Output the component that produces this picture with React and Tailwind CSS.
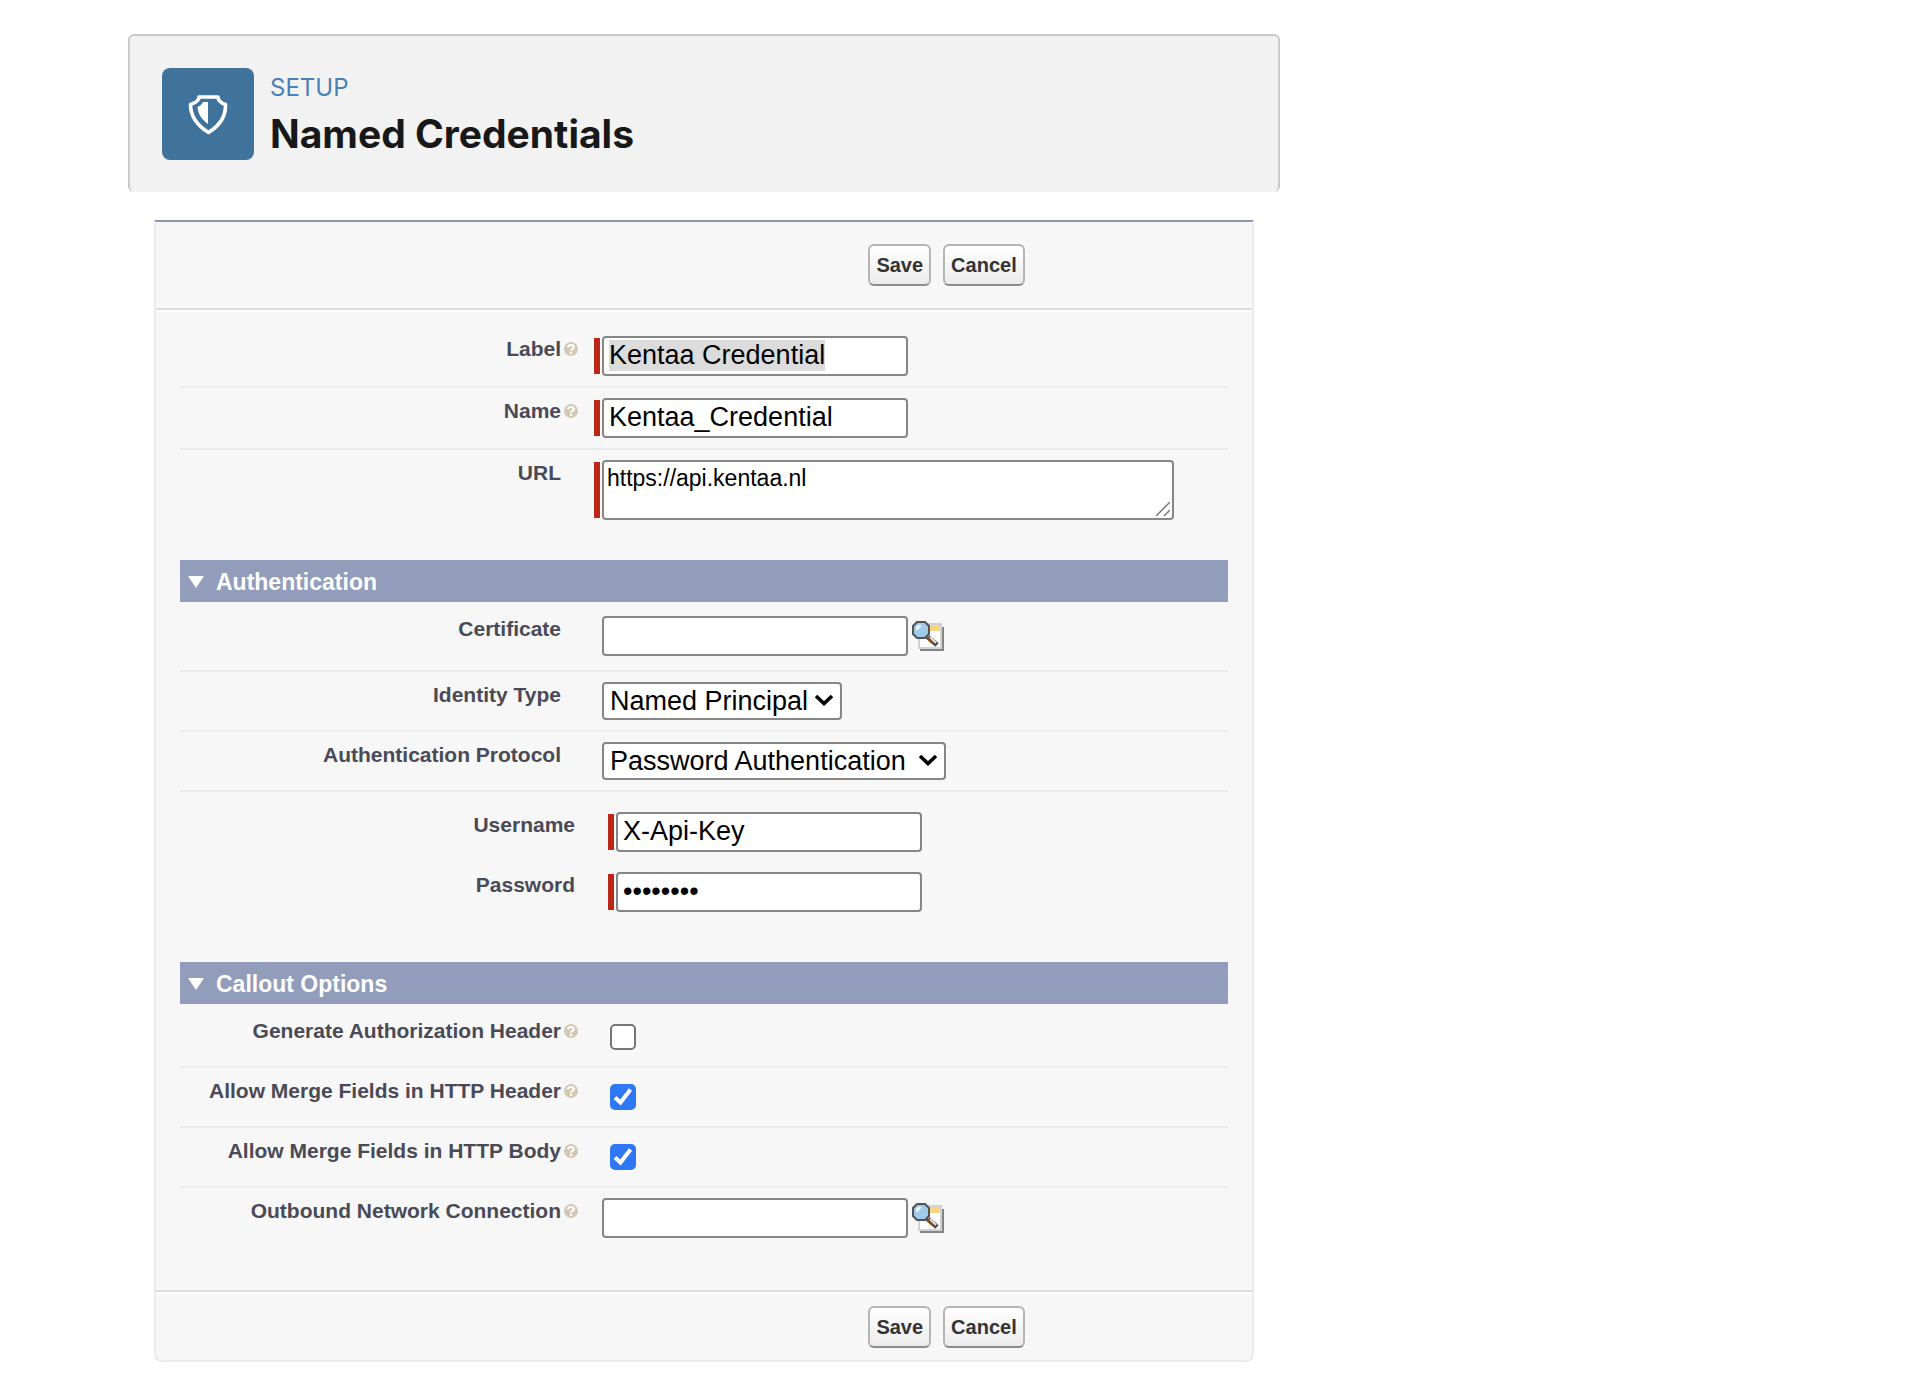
import { useEffect, useRef } from "react";

const fieldBorder = "border-2 border-[#868686] rounded-sm bg-white text-black";
const textInput = `${fieldBorder} h-10 w-[306px] px-[5px] pt-0.5 pb-1 text-[27px] leading-[30px] outline-none`;

// ==========================
// ICONS
// ==========================
function ShieldIcon() {
  return (
    <svg className="size-[92px]" viewBox="0 0 92 92" fill="none" aria-hidden="true">
      <path
        d="M37 29H56C56 32 59 35 63.500 36.500C64 49 57 58 46.500 64.500C36 58 28.500 49 28.500 36.500C33 35 37 32 37 29Z"
        stroke="white"
        strokeWidth="3.600"
        strokeLinejoin="round"
      />
      <path d="M46 34V56C39 51 36 45 35.500 39C38 38 40 36 41 34Z" fill="white" />
    </svg>
  );
}

function HelpIcon() {
  return (
    <svg className="size-3.5" viewBox="0 0 14 14" fill="none" aria-hidden="true">
      <circle cx="7" cy="7" r="7" fill="#d3c8b4" />
      <path d="M4 5.200C4.500 2.200 10 2.400 9.800 5.200C9.600 6.800 7.200 6.600 7.100 8.800" stroke="white" strokeWidth="2.200" />
      <rect x="6" y="9.800" width="2.200" height="2.200" fill="white" />
    </svg>
  );
}

function LookupIcon() {
  return (
    <svg className="h-[30px] w-8" viewBox="0 0 32 30" aria-hidden="true">
      <path d="M8 28H30V6H32V30H8Z" fill="#848484" />
      <rect x="7" y="3" width="22" height="24" fill="white" stroke="#d2d2d2" strokeWidth="2" />
      <rect x="16" y="4" width="12" height="6" fill="#f9d581" />
      <path d="M16 16L25 24" stroke="#4a4a4a" strokeWidth="5" />
      <path d="M14 16L21 22" stroke="#8a4b12" strokeWidth="2.500" />
      <path d="M18 16L24 22" stroke="#e4e4e4" strokeWidth="2" />
      <path d="M5 1H13L17 5V13L13 17H5L1 13V5Z" fill="#9fcbe8" stroke="#4f5459" strokeWidth="2" />
      <path d="M4 9V6L6 4H10L6 9Z" fill="#e9f5fc" />
    </svg>
  );
}

// ==========================
// FORM PARTS
// ==========================
function ButtonBar({ className }) {
  const button =
    "h-[42px] rounded-md border-2 border-[#b5b5b5] border-b-[#8c8c8c] bg-gradient-to-b from-white to-[#ececec] px-1.5 text-xl leading-6 font-bold text-[#333]";
  return (
    <div className={`flex gap-3 pl-[65%] ${className}`}>
      <button type="button" className={button}>Save</button>
      <button type="button" className={button}>Cancel</button>
    </div>
  );
}

function Row({ id, label, help, required, className = "pt-2.5 pb-2.5", line = true, children }) {
  return (
    <div className={`flex items-start ${line ? "border-b-2 border-[#ececec]" : ""} ${className}`}>
      <div className="flex w-[398px] shrink-0 justify-end gap-[3px]">
        <label htmlFor={id} className="text-[21px] leading-[26px] font-bold whitespace-nowrap text-[#4a4a56]">
          {label}
        </label>
        <span className="w-3.5 pt-1.5">{help && <HelpIcon />}</span>
      </div>
      <div className="ml-4 flex min-w-0 flex-1 gap-0.5">
        <span className={`my-0.5 w-1.5 shrink-0 ${required ? "bg-[#ba2719]" : ""}`} />
        {children}
      </div>
    </div>
  );
}

function SectionTitle({ children }) {
  return (
    <h2 className="flex h-[42px] items-center gap-3 bg-[#919dba] pt-0.5 pl-2 text-[23px] leading-7 font-bold text-white">
      <svg className="h-3 w-4" viewBox="0 0 16 12" aria-hidden="true">
        <path d="M0 0H16L8 12Z" fill="white" />
      </svg>
      {children}
    </h2>
  );
}

function Select({ id, className, children }) {
  return (
    <div className="relative">
      <select id={id} className={`${fieldBorder} h-[38px] appearance-none px-1.5 text-[27px] leading-[30px] outline-none ${className}`}>
        {children}
      </select>
      <svg className="pointer-events-none absolute top-3 right-2 h-3 w-5" viewBox="0 0 20 12" fill="none" aria-hidden="true">
        <path d="M2 2L10 9.500L18 2" stroke="black" strokeWidth="3.600" />
      </svg>
    </div>
  );
}

function Checkbox({ id, checked }) {
  return (
    <div className="relative mt-1.5 ml-2 size-[26px]">
      <input
        id={id}
        type="checkbox"
        defaultChecked={checked}
        className="peer block size-[26px] appearance-none rounded-[5px] border-2 border-[#767676] bg-white checked:border-[#2e77f5] checked:bg-[#2e77f5]"
      />
      <svg className="pointer-events-none absolute inset-0 hidden size-[26px] peer-checked:block" viewBox="0 0 26 26" fill="none" aria-hidden="true">
        <path d="M5 13.500L10.500 18.500L20.500 5.500" stroke="white" strokeWidth="4" />
      </svg>
    </div>
  );
}

function Lookup({ id, name }) {
  return (
    <>
      <input id={id} type="text" className={textInput} />
      <button type="button" aria-label={name} className="mt-[5px] ml-0.5 h-[30px]">
        <LookupIcon />
      </button>
    </>
  );
}

function App() {
  const labelRef = useRef(null);

  // The label starts selected so it can be overwritten right away
  useEffect(() => {
    labelRef.current.focus();
    labelRef.current.select();
  }, []);

  return (
    <div className="min-h-screen bg-white pt-[34px] pb-4 font-['Liberation_Sans',Arial,sans-serif]">
      <div className="ml-32 w-3/5">
        {/* Header */}
        <header className="flex h-[158px] items-start gap-4 rounded-md border-2 border-b-0 border-[#c9c9c9] bg-[#f2f2f2] px-8 pt-8 font-['Inter',sans-serif]">
          <div className="size-[92px] shrink-0 rounded-lg bg-[#40739b]">
            <ShieldIcon />
          </div>
          <div className="pt-1.5">
            <p className="text-2xl leading-7 text-[#4a80b5]">SETUP</p>
            <h1 className="mt-2 text-[39px] leading-12 font-bold whitespace-nowrap text-[#181818]">Named Credentials</h1>
          </div>
        </header>

        {/* Form */}
        <form className="mx-[26px] mt-7 rounded-b-lg border-2 border-[#ebebeb] border-t-[#8f92ad] bg-[#f7f7f7]">
          <ButtonBar className="pt-[22px] pb-[22px]" />

          <div className="border-t-2 border-b-2 border-[#dcdcdc]">
            <div className="border-t-2 border-white px-6">
              <Row id="label" label="Label" help required className="pt-6 pb-2.5">
                <input ref={labelRef} id="label" type="text" defaultValue="Kentaa Credential" className={`${textInput} selection:bg-[#dcdcdc] selection:text-black`} />
              </Row>
              <Row id="name" label="Name" help required>
                <input id="name" type="text" defaultValue="Kentaa_Credential" className={textInput} />
              </Row>
              <Row id="url" label="URL" required line={false} className="pt-2.5 pb-10">
                <div className="relative w-full max-w-[572px]">
                  <textarea
                    id="url"
                    defaultValue="https://api.kentaa.nl"
                    className={`${fieldBorder} block h-[60px] w-full resize-none overflow-hidden px-[3px] pt-1 text-[23px] leading-6 outline-none`}
                  />
                  <svg className="pointer-events-none absolute right-1 bottom-1 size-3.5" viewBox="0 0 14 14" aria-hidden="true">
                    <path d="M0 14L14 0M8 14L14 8" stroke="#777" strokeWidth="1.500" />
                  </svg>
                </div>
              </Row>

              <SectionTitle>Authentication</SectionTitle>
              <Row id="certificate" label="Certificate" className="pt-3.5 pb-3.5">
                <Lookup id="certificate" name="Certificate Lookup" />
              </Row>
              <Row id="identity" label="Identity Type">
                <Select id="identity" className="w-60">
                  <option>Named Principal</option>
                </Select>
              </Row>
              <Row id="protocol" label="Authentication Protocol">
                <Select id="protocol" className="w-[344px]">
                  <option>Password Authentication</option>
                </Select>
              </Row>
              <Row id="username" label="Username" required line={false} className="pt-5 pl-3.5">
                <input id="username" type="text" defaultValue="X-Api-Key" className={textInput} />
              </Row>
              <Row id="password" label="Password" required line={false} className="pt-5 pb-[50px] pl-3.5">
                <input id="password" type="password" defaultValue="password" className={textInput} />
              </Row>

              <SectionTitle>Callout Options</SectionTitle>
              <Row id="auth-header" label="Generate Authorization Header" help className="pt-3.5 pb-4">
                <Checkbox id="auth-header" />
              </Row>
              <Row id="merge-header" label="Allow Merge Fields in HTTP Header" help className="pt-2.5 pb-4">
                <Checkbox id="merge-header" checked />
              </Row>
              <Row id="merge-body" label="Allow Merge Fields in HTTP Body" help className="pt-2.5 pb-4">
                <Checkbox id="merge-body" checked />
              </Row>
              <Row id="outbound" label="Outbound Network Connection" help line={false} className="pt-2.5 pb-[52px]">
                <Lookup id="outbound" name="Outbound Network Connection Lookup" />
              </Row>
            </div>
          </div>

          <ButtonBar className="border-t-2 border-white pt-3 pb-3" />
        </form>
      </div>
    </div>
  );
}

export default App;
